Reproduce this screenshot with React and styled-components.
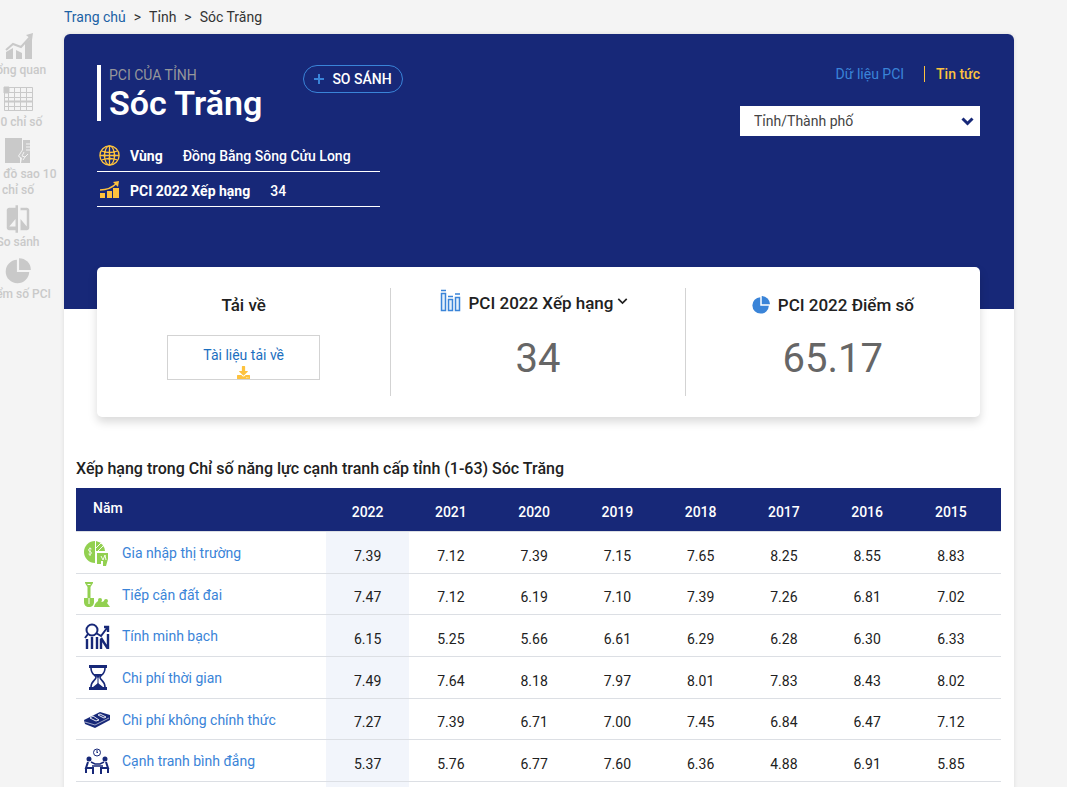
import React from 'react';
import styled, { createGlobalStyle } from 'styled-components';
import { FaDownload } from 'react-icons/fa';
import { MdCompare } from 'react-icons/md';

const navy = '#172878';
const blue = '#3a84d8';
const gold = '#fdc23e';

const GlobalStyle = createGlobalStyle`
  * { box-sizing: border-box; }
  body {
    margin: 0;
    background: #f4f4f4;
    color: #212121;
    font-family: Roboto, "Liberation Sans", sans-serif;
    font-size: 14px;
    line-height: 16px;
  }
  a { text-decoration: none; color: inherit; }
  h1, h2, p { margin: 0; }
`;

const Page = styled.div`
  display: grid;
  grid-template-columns: 64px minmax(0, 1fr);
  height: 100vh;
  overflow: hidden;
  padding-right: 53px;
`;

const SideNav = styled.nav`
  width: 92px;
  margin-left: -28px;
  padding-top: 32px;
  display: flex;
  flex-direction: column;
  gap: 6px;
  color: #c9c9c9;
`;

const SideLink = styled.a`
  display: flex;
  flex-direction: column;
  align-items: center;
  font-size: 12px;
  font-weight: 500;
  text-align: center;

  svg { width: 30px; height: 30px; display: block; }
`;

const Breadcrumb = styled.nav`
  display: flex;
  gap: 8px;
  padding: 9px 0;
  color: #333;

  a:first-child { color: #1b62a5; }
`;

const Sheet = styled.main`
  background: #fff;
  border-radius: 6px 6px 0 0;
  min-height: 100vh;
  box-shadow: 0 0 4px rgba(0, 0, 0, 0.1);
`;

const Hero = styled.header`
  height: 275px;
  padding: 31px 34px 0 33px;
  background: ${navy};
  color: #fff;
  border-radius: 6px 6px 0 0;
  display: flex;
  justify-content: space-between;
`;

const TitleRow = styled.div`
  display: flex;
  align-items: flex-start;
  justify-content: space-between;
  width: 306px;
`;

const TitleBlock = styled.div`
  height: 56px;
  padding-left: 8px;
  border-left: 4px solid #fff;
  white-space: nowrap;
`;

const Kicker = styled.p`
  padding-top: 2px;
  color: #96979b;
`;

const Title = styled.h1`
  font-size: 34px;
  line-height: 40px;
  font-weight: 600;
`;

const CompareButton = styled.button`
  flex: none;
  display: flex;
  align-items: center;
  justify-content: center;
  gap: 8px;
  width: 100px;
  height: 28px;
  padding: 0;
  border: 1px solid ${blue};
  border-radius: 14px;
  background: transparent;
  color: #fff;
  font: 500 14px Roboto, sans-serif;
  white-space: nowrap;

  svg { width: 10px; height: 10px; }
`;

const Facts = styled.dl`
  width: 283px;
  margin: 16px 0 0;
`;

const Fact = styled.div`
  display: flex;
  align-items: center;
  height: 35px;
  padding: 3px 0 0 2px;
  border-bottom: 1px solid #fff;

  svg { width: 21px; height: 21px; margin-right: 10px; }
  dt { font-weight: 700; }
  dd { margin: 0 0 0 20px; font-weight: 500; }
`;

const HeroSide = styled.div`
  display: flex;
  flex-direction: column;
  align-items: flex-end;
  gap: 24px;
  padding-top: 1px;
`;

const TopLinks = styled.nav`
  display: flex;
  color: ${blue};

  a + a {
    margin-left: 20px;
    padding-left: 11px;
    border-left: 1px solid ${gold};
    color: ${gold};
    font-weight: 500;
  }
`;

const SelectBox = styled.label`
  display: grid;
  align-items: center;
  width: 240px;
  height: 30px;

  select, svg { grid-area: 1 / 1; }
  svg { justify-self: end; margin-right: 6px; width: 13px; height: 10px; pointer-events: none; }
`;

const Select = styled.select`
  width: 100%;
  height: 30px;
  padding: 0 14px;
  border: 0;
  border-radius: 0;
  appearance: none;
  background: #fff;
  color: #444;
  font: 14px Roboto, sans-serif;
`;

const Stats = styled.section`
  position: relative;
  display: grid;
  grid-template-columns: repeat(3, 1fr);
  height: 150px;
  margin: -42px 34px 0 33px;
  padding: 21px 0;
  background: #fff;
  border-radius: 5px;
  box-shadow: 0 5px 10px rgba(0, 0, 0, 0.15);
`;

const Stat = styled.div`
  display: flex;
  flex-direction: column;
  align-items: center;
  border-right: 1px solid #d3d3d3;

  &:last-child { border-right: 0; }
`;

const StatHead = styled.h2`
  display: flex;
  align-items: center;
  gap: 8px;
  height: 34px;
  font-size: 17px;
  line-height: 20px;
  font-weight: 500;

  svg { width: 18px; height: 18px; color: ${blue}; }
`;

const RankToggle = styled.button`
  display: flex;
  align-items: center;
  gap: 8px;
  padding: 0 8px 4px 0;
  border: 0;
  background: none;
  color: inherit;
  font: inherit;

  svg:first-child { width: 21px; height: 23px; margin-top: -5px; }
  svg:last-child { width: 11px; height: 10px; margin: -5px 0 0 -4px; }
`;

const StatValue = styled.p`
  padding-top: 13px;
  font-size: 40px;
  line-height: 48px;
  color: #666;
`;

const DownloadLink = styled.a`
  display: flex;
  flex-direction: column;
  align-items: center;
  gap: 3px;
  width: 153px;
  height: 45px;
  margin-top: 13px;
  padding-top: 11px;
  border: 1px solid #d3d3d3;
  color: #1b6fc0;

  svg { width: 15px; height: 13px; fill: ${gold}; }
`;

const Ranking = styled.section`
  padding: 42px 13px 0 12px;
`;

const RankingTitle = styled.h2`
  padding-bottom: 9px;
  font-size: 16px;
  line-height: 20px;
  font-weight: 500;
`;

const Table = styled.table`
  width: 100%;
  table-layout: fixed;
  border-collapse: separate;
  border-spacing: 0;

  thead tr { height: 44px; background: ${navy}; color: #fff; }
  tbody tr { height: 42px; }
  tbody tr:nth-child(3n + 2) { height: 41px; }
  tbody td:nth-child(2) { background: #f2f5fb; }
`;

const YearHead = styled.th`
  width: 9%;
  padding: 4px 0 0;
  border-bottom: 1px solid #dcdfe4;
  font-weight: 500;

  &:last-child { width: auto; padding-right: 8px; }
`;

const LabelHead = styled(YearHead)`
  width: 250px;
  padding: 0 17px 4px;
  text-align: left;
`;

const Score = styled.td`
  padding: 6px 0 0;
  border-bottom: 1px solid #dcdfe4;
  text-align: center;

  &:last-child { padding-right: 8px; }
`;

const IndexCell = styled.th`
  padding: 1px 0 0 8px;
  border-bottom: 1px solid #dcdfe4;
  font-weight: 400;
  text-align: left;
`;

const IndexLink = styled.a`
  display: flex;
  align-items: center;
  gap: 12px;
  color: ${blue};

  svg { width: 26px; height: 26px; flex: none; }
`;

const PlusIcon = () => (
  <svg viewBox="0 0 10 10" fill={blue}>
    <path d="M4 0h2v4h4v2H6v4H4V6H0V4h4z" />
  </svg>
);

const PieIcon = ({ inset = 0 }) => (
  <svg viewBox={`${-inset} ${-inset} ${24 + inset * 2} ${24 + inset * 2}`} fill="currentColor">
    <path d="M11 1.500V13h11.500A11 11 0 1 1 11 1.500z" />
    <path d="M13 0a11 11 0 0 1 11 11H13z" />
  </svg>
);

const TrendIcon = () => (
  <svg viewBox="0 0 30 30" fill="currentColor">
    <path d="M3 20l7-4v11H3zM13 18l6 3v6h-6zM22 11l7-6v22h-7z" />
    <path d="M3 18l7-6 8 3L28 4" fill="none" stroke="currentColor" strokeWidth="2" />
    <path d="M23 3l7-2-1 7z" />
  </svg>
);

const GridIcon = () => (
  <svg viewBox="0 0 30 30" fill="none" stroke="currentColor" strokeWidth="1">
    <path d="M1.500 3.500h28v23h-28zM1.500 8.500h28M1.500 13.500h28M1.500 22.500h28M5.500 3v24M11.500 3v24M17.500 3v24M23.500 3v24" />
    <path d="M1 17.500h29" strokeWidth="2" />
    <path d="M1 3h5v6H1z" fill="currentColor" />
  </svg>
);

const MapIcon = () => (
  <svg viewBox="0 0 30 30" fill="currentColor">
    <path d="M2 2h17v12l-4 6 2 2v5H2z" />
    <path d="M20 4h7v23h-9l1-5-3-2 4-6z" />
    <path d="M23 8h4M23 11h4M23 14h4M21 16l-2 4 3 1 3-3M22 21l-2 3" stroke="#f4f4f4" fill="none" />
  </svg>
);

const GlobeIcon = () => (
  <svg viewBox="0 0 21 21" fill="none" stroke={gold} strokeWidth="1.300">
    <circle cx="10.500" cy="10.500" r="9.600" />
    <ellipse cx="10.500" cy="10.500" rx="5" ry="9.600" />
    <path d="M10.500 1v19M1 10.500h19M2.500 6q8 3 16 0M2.500 15q8-3 16 0" />
    <g fill={gold} stroke="none">
      <circle cx="6" cy="7" r="1" /><circle cx="15" cy="7" r="1" />
      <circle cx="5.500" cy="10.500" r="1.200" /><circle cx="15.500" cy="10.500" r="1.200" />
      <circle cx="10.500" cy="13.500" r="1.300" />
    </g>
  </svg>
);

const GoldTrendIcon = () => (
  <svg viewBox="0 0 21 21" fill={gold}>
    <path d="M1 13h5v5H1zM8 11h5v7H8zM14 8h6v10h-6z" />
    <path d="M1 10q10 0 17-7" fill="none" stroke={gold} strokeWidth="1.500" />
    <path d="M14 2l6-1-1 6z" />
  </svg>
);

const BarsIcon = () => (
  <svg viewBox="0 0 21 23" fill="none" stroke={blue} strokeWidth="1.500">
    <path d="M1.500 4.500h4v17h-4zM8.500 10.500h4v11h-4zM15.500 8.500h4v13h-4z" fill="#e4f0fb" />
    <path d="M1 1.500h5M8 7.500h5M15 5h5" />
  </svg>
);

const Chevron = ({ color, weight = 3 }) => (
  <svg viewBox="0 0 13 10" fill="none" stroke={color} strokeWidth={weight}>
    <path d="M1.500 2.500l5 5 5-5" />
  </svg>
);

const green = '#92d050';

const MarketIcon = () => (
  <svg viewBox="0 0 26 26" fill={green}>
    <path d="M11 1v22A11 11 0 0 1 11 1z" />
    <path d="M12 1a11 11 0 0 1 9 10h-9z" />
    <path d="M13 13h11v6l-2 7h-3v-5h-2v3h-4z" />
    <path d="M12 8l5-5M14 11l6-6M17 16l2 4 2-5 1 5" fill="none" stroke="#fff" strokeWidth="0.900" />
    <path d="M7.500 9c-3-2-4 2-1.500 2.500s1.500 4-1.500 2.500M6 7.500v8.500" fill="none" stroke="#fff" strokeWidth="0.800" />
  </svg>
);

const ShovelIcon = () => (
  <svg viewBox="0 0 26 26" fill={green}>
    <path d="M1 0h8v1L6.500 5v11H10v4c0 3-2 5-5 5s-5-2-5-5v-4h3.500V5L1 1z" />
    <path d="M10 25c1-4 3-5 5-7l3 2 4-2 1 3 3 4z" />
    <circle cx="16" cy="18" r="2" /><circle cx="22" cy="19" r="2" />
    <path d="M5 16v6M3.500 2.500h3" stroke="#fff" strokeWidth="1" />
  </svg>
);

const MagnifierIcon = () => (
  <svg viewBox="0 0 26 26" fill="none" stroke={navy} strokeWidth="2.400">
    <circle cx="8" cy="7" r="5.500" strokeWidth="2" />
    <path d="M4 11l-3 4M12 10l5 3 6-8" strokeWidth="2" />
    <path d="M20 4h4v5M3 16v10M8 14v12M13 14v12M17 16v10M24 11v15M17 15l7 11" />
  </svg>
);

const HourglassIcon = () => (
  <svg viewBox="0 0 26 26" fill={navy}>
    <path d="M5 0h18v3H5zM5 22h18v3H5z" />
    <path d="M7 3c0 7 5 7 5 9.500S7 16 7 22M21 3c0 7-5 7-5 9.500s5 3.500 5 9.500" fill="none" stroke={navy} strokeWidth="1.600" />
    <path d="M9 9h10l-5 4zM14 18l5 4H9z" />
    <path d="M14 12v7" stroke={navy} />
  </svg>
);

const MoneyIcon = () => (
  <svg viewBox="0 0 26 26" fill={navy}>
    <path d="M0 13L16 5l10 3v5L11 21 1 17z" />
    <path d="M1 15l10 3 14-7" fill="none" stroke="#fff" strokeWidth="0.600" />
    <path d="M6 11l6 3 3-1-6-4zM14 8l6 3 2-1-6-3z" fill="none" stroke="#fff" strokeWidth="0.900" />
  </svg>
);

const MeetingIcon = () => (
  <svg viewBox="0 0 26 26" fill="none" stroke={navy} strokeWidth="2">
    <circle cx="13" cy="4.500" r="3.500" strokeWidth="1" />
    <path d="M13 2v3l1-1" strokeWidth="1" />
    <circle cx="5" cy="11" r="1.500" fill={navy} />
    <circle cx="21" cy="11" r="1.500" fill={navy} />
    <path d="M7 14l4 2h5l4-2M8 18h11" strokeWidth="1.400" />
    <path d="M4 14l-2 6h7v6M22 14l2 6h-7v6M2 20v5M24 20v5" />
  </svg>
);

const sideItems = [
  { label: 'Tổng quan', Icon: TrendIcon },
  { label: '10 chỉ số', Icon: GridIcon },
  { label: 'Bản đồ sao 10 chỉ số', Icon: MapIcon },
  { label: 'So sánh', Icon: MdCompare },
  { label: 'Điểm số PCI', Icon: () => <PieIcon inset={2} /> },
];

const years = [2022, 2021, 2020, 2019, 2018, 2017, 2016, 2015];

const rows = [
  { label: 'Gia nhập thị trường', Icon: MarketIcon, scores: ['7.39', '7.12', '7.39', '7.15', '7.65', '8.25', '8.55', '8.83'] },
  { label: 'Tiếp cận đất đai', Icon: ShovelIcon, scores: ['7.47', '7.12', '6.19', '7.10', '7.39', '7.26', '6.81', '7.02'] },
  { label: 'Tính minh bạch', Icon: MagnifierIcon, scores: ['6.15', '5.25', '5.66', '6.61', '6.29', '6.28', '6.30', '6.33'] },
  { label: 'Chi phí thời gian', Icon: HourglassIcon, scores: ['7.49', '7.64', '8.18', '7.97', '8.01', '7.83', '8.43', '8.02'] },
  { label: 'Chi phí không chính thức', Icon: MoneyIcon, scores: ['7.27', '7.39', '6.71', '7.00', '7.45', '6.84', '6.47', '7.12'] },
  { label: 'Cạnh tranh bình đẳng', Icon: MeetingIcon, scores: ['5.37', '5.76', '6.77', '7.60', '6.36', '4.88', '6.91', '5.85'] },
];

export default function App() {
  return (
    <>
      <GlobalStyle />
      <Page>
        <SideNav>
          {sideItems.map(({ label, Icon }) => (
            <SideLink href="#" key={label}>
              <Icon />
              {label}
            </SideLink>
          ))}
        </SideNav>
        <div>
          <Breadcrumb>
            <a href="#">Trang chủ</a>
            <span>&gt;</span>
            <a href="#">Tỉnh</a>
            <span>&gt;</span>
            <span>Sóc Trăng</span>
          </Breadcrumb>
          <Sheet>
            <Hero>
              <div>
                <TitleRow>
                  <TitleBlock>
                    <Kicker>PCI CỦA TỈNH</Kicker>
                    <Title>Sóc Trăng</Title>
                  </TitleBlock>
                  <CompareButton type="button">
                    <PlusIcon />
                    SO SÁNH
                  </CompareButton>
                </TitleRow>
                <Facts>
                  <Fact>
                    <GlobeIcon />
                    <dt>Vùng</dt>
                    <dd>Đồng Bằng Sông Cửu Long</dd>
                  </Fact>
                  <Fact>
                    <GoldTrendIcon />
                    <dt>PCI 2022 Xếp hạng</dt>
                    <dd>34</dd>
                  </Fact>
                </Facts>
              </div>
              <HeroSide>
                <TopLinks>
                  <a href="#">Dữ liệu PCI</a>
                  <a href="#">Tin tức</a>
                </TopLinks>
                <SelectBox>
                  <Select aria-label="Tỉnh/Thành phố">
                    <option>Tỉnh/Thành phố</option>
                  </Select>
                  <Chevron color={navy} />
                </SelectBox>
              </HeroSide>
            </Hero>
            <Stats>
              <Stat>
                <StatHead>Tải về</StatHead>
                <DownloadLink href="#">
                  Tài liệu tải về
                  <FaDownload />
                </DownloadLink>
              </Stat>
              <Stat>
                <StatHead>
                  <RankToggle type="button">
                    <BarsIcon />
                    PCI 2022 Xếp hạng
                    <Chevron color="#212121" weight={2} />
                  </RankToggle>
                </StatHead>
                <StatValue>34</StatValue>
              </Stat>
              <Stat>
                <StatHead>
                  <PieIcon />
                  PCI 2022 Điểm số
                </StatHead>
                <StatValue>65.17</StatValue>
              </Stat>
            </Stats>
            <Ranking>
              <RankingTitle>Xếp hạng trong Chỉ số năng lực cạnh tranh cấp tỉnh (1-63) Sóc Trăng</RankingTitle>
              <Table>
                <thead>
                  <tr>
                    <LabelHead scope="col">Năm</LabelHead>
                    {years.map((year) => (
                      <YearHead scope="col" key={year}>{year}</YearHead>
                    ))}
                  </tr>
                </thead>
                <tbody>
                  {rows.map(({ label, Icon, scores }) => (
                    <tr key={label}>
                      <IndexCell scope="row">
                        <IndexLink href="#">
                          <Icon />
                          {label}
                        </IndexLink>
                      </IndexCell>
                      {scores.map((score, i) => (
                        <Score key={years[i]}>{score}</Score>
                      ))}
                    </tr>
                  ))}
                  <tr aria-hidden="true">
                    <td />
                    <td />
                    <td colSpan={7} />
                  </tr>
                </tbody>
              </Table>
            </Ranking>
          </Sheet>
        </div>
      </Page>
    </>
  );
}
